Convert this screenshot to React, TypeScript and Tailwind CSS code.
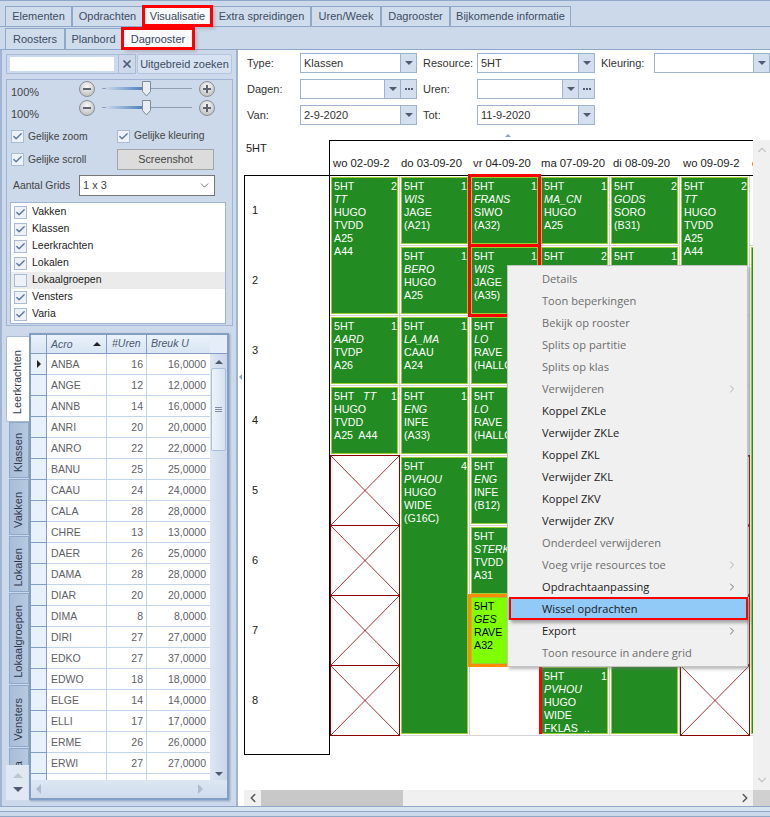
import React from "react";
import { ChevronLeft, ChevronRight, ChevronUp, ChevronDown, X, Check } from "lucide-react";

function Tab({ label, w, active, red }: { label: string; w: number; active?: boolean; red?: boolean }) {
  return (
    <div
      style={{ width: w }}
      className={
        "flex h-full shrink-0 items-center justify-center whitespace-nowrap border border-b-0 border-[#8fa8c8] text-[11px] " +
        (active ? "bg-[#f7f9fc] text-[#39475c] " : "bg-[#cfdcec] text-[#3c4c63] ") +
        (red ? "relative z-10 outline-[3px] -outline-offset-2 outline-[#ff0000] shadow-[3px_3px_3px_#8886]" : "")
      }
    >
      {label}
    </div>
  );
}

function Arrow() {
  return <span className="h-0 w-0 border-x-[4px] border-t-[4px] border-x-transparent border-t-[#4d5c72]" />;
}

function Combo({ w, text, dots }: { w: number; text?: string; dots?: boolean }) {
  return (
    <div style={{ width: w }} className="flex h-[20px] shrink-0 border border-[#9fb3cd] bg-white text-[11px] text-[#333]">
      <div className="flex-1 truncate pl-[3px] leading-[18px]">{text}</div>
      <div className="flex w-[16px] items-center justify-center border-l border-[#9fb3cd] bg-[#d3dfee]">
        <Arrow />
      </div>
      {dots && (
        <div className="flex w-[16px] items-center justify-center gap-px border-l border-[#9fb3cd] bg-[#d3dfee]">
          <span className="h-[2px] w-[2px] bg-[#4d5c72]" />
          <span className="h-[2px] w-[2px] bg-[#4d5c72]" />
          <span className="h-[2px] w-[2px] bg-[#4d5c72]" />
        </div>
      )}
    </div>
  );
}

function Label({ w, children, ml }: { w: number; children: React.ReactNode; ml?: number }) {
  return (
    <div style={{ width: w, marginLeft: ml }} className="shrink-0 text-[11px] leading-[20px] text-[#333]">
      {children}
    </div>
  );
}

function RoundBtn({ plus }: { plus?: boolean }) {
  return (
    <svg width="16" height="16" viewBox="0 0 16 16" className="shrink-0">
      <defs>
        <radialGradient id={plus ? "gp" : "gm"} cx="50%" cy="35%" r="70%">
          <stop offset="0%" stopColor="#fafafa" />
          <stop offset="100%" stopColor="#b9b9b9" />
        </radialGradient>
      </defs>
      <circle cx="8" cy="8" r="7.5" fill={`url(#${plus ? "gp" : "gm"})`} stroke="#8a8f96" />
      <rect x="4" y="7" width="8" height="2" fill="#5d6670" />
      {plus && <rect x="7" y="4" width="2" height="8" fill="#5d6670" />}
    </svg>
  );
}

function Slider() {
  return (
    <div className="flex h-[16px] w-[136px] items-center justify-between">
      <RoundBtn />
      <div className="relative h-[16px] w-[90px]">
        <div className="absolute left-0 right-0 top-[7px] h-px bg-[#8f9fb3]" />
        <div className="absolute left-[4px] top-[6px] h-[3px] w-[42px] bg-gradient-to-r from-[#c9d7ea] to-[#3f74b5]" />
        <svg width="10" height="16" viewBox="0 0 10 16" className="absolute left-[40px] top-0">
          <path d="M.5.5h8v10L4.5 15 .5 10.5z" fill="#e9edf2" stroke="#7f8b99" />
        </svg>
      </div>
      <RoundBtn plus />
    </div>
  );
}

function Check2({ on = true }: { on?: boolean }) {
  return (
    <span className="flex h-[13px] w-[13px] shrink-0 items-center justify-center border border-[#a9bcd5] bg-[#eef2f7]">
      {on && <Check size={11} strokeWidth={3} className="text-[#5878a3]" />}
    </span>
  );
}

function CheckText({ label }: { label: string }) {
  return (
    <div className="flex items-center gap-[4px] whitespace-nowrap text-[10.3px] text-[#444]">
      <Check2 />
      <span>{label}</span>
    </div>
  );
}

function VTab({ label, h, active }: { label: string; h: number; active?: boolean }) {
  return (
    <div
      style={{ height: h }}
      className={
        "flex shrink-0 items-center justify-center pr-[2px] pt-[6px] " +
        (active
          ? "w-[23px] rounded-l-[2px] border border-r-0 border-[#a8bcd6] bg-white "
          : "ml-[3px] w-[20px] border border-[#8fa8c8] bg-gradient-to-r from-[#a9bdd8] to-[#b7c9e0] ")
      }
    >
      <span className="rotate-180 whitespace-nowrap text-[11px] text-[#2f3b4d] [writing-mode:vertical-rl]">{label}</span>
    </div>
  );
}

const rows: [string, number, string][] = [
  ["ANBA", 16, "16,0000"], ["ANGE", 12, "12,0000"], ["ANNB", 14, "16,0000"], ["ANRI", 20, "20,0000"],
  ["ANRO", 22, "22,0000"], ["BANU", 25, "25,0000"], ["CAAU", 24, "24,0000"], ["CALA", 28, "28,0000"],
  ["CHRE", 13, "13,0000"], ["DAER", 26, "25,0000"], ["DAMA", 28, "28,0000"], ["DIAR", 20, "20,0000"],
  ["DIMA", 8, "8,0000"], ["DIRI", 27, "27,0000"], ["EDKO", 27, "37,0000"], ["EDWO", 18, "18,0000"],
  ["ELGE", 14, "14,0000"], ["ELLI", 17, "17,0000"], ["ERME", 26, "26,0000"], ["ERWI", 27, "27,0000"],
  ["", 0, ""],
];

function Table() {
  return (
    <div className="flex h-[467px] w-[200px] shrink-0 flex-col border-2 border-[#829fc3] bg-white shadow-[1px_1px_2px_#8aa0bb]">
      <div className="flex min-h-0 flex-1">
        <div className="flex w-[179px] shrink-0 flex-col overflow-hidden">
          <div className="flex h-[19px] shrink-0 border-b border-[#829fc3] bg-gradient-to-b from-[#eaf2fb] to-[#d9e5f4] text-[10.5px] italic leading-[17px] text-[#4a5a70]">
            <div className="w-[16px] border-r border-[#829fc3]" />
            <div className="flex w-[60px] items-center justify-between border-r border-[#829fc3] pl-[4px] pr-[5px]">
              Acro
              <span className="h-0 w-0 border-x-[4px] border-b-[4px] border-x-transparent border-b-[#222]" />
            </div>
            <div className="w-[40px] border-r border-[#829fc3] pl-[5px]">#Uren</div>
            <div className="flex-1 pl-[4px]">Breuk U</div>
          </div>
          {rows.map((r, i) => (
            <div key={i} className="flex h-[21px] shrink-0 text-[10.5px] leading-[20px] text-[#5e6066]">
              <div className="flex w-[16px] items-center justify-center border-b border-r border-[#829fc3] bg-[#e8f1fb]">
                {i === 0 && <span className="h-0 w-0 border-y-[4px] border-l-[4px] border-y-transparent border-l-[#222]" />}
              </div>
              <div className="w-[60px] border-b border-r border-[#c3d5ec] pl-[4px]">{r[0]}</div>
              <div className="w-[40px] border-b border-r border-[#c3d5ec] pr-[3px] text-right">{r[1] || ""}</div>
              <div className="flex-1 border-b border-[#c3d5ec] pr-[4px] text-right">{r[2]}</div>
            </div>
          ))}
        </div>
        <div className="flex flex-1 flex-col items-center bg-gradient-to-r from-[#dde7f4] to-[#c9d7ea]">
          <div className="h-[19px] w-full border-b border-[#829fc3] bg-[#e4edf8]" />
          <span className="mt-[6px] h-0 w-0 border-x-[4px] border-b-[4px] border-x-transparent border-b-[#4d5c72]" />
          <div className="mt-[4px] flex h-[83px] w-[15px] items-center justify-center rounded-[2px] border border-[#a9c0dc] bg-gradient-to-r from-[#eef3fa] to-[#d6e2f1]">
            <div className="flex w-[7px] flex-col gap-px">
              <span className="h-px bg-[#7f8fa5]" />
              <span className="h-px bg-[#7f8fa5]" />
              <span className="h-px bg-[#7f8fa5]" />
            </div>
          </div>
          <span className="mb-[4px] mt-auto h-0 w-0 border-x-[4px] border-t-[4px] border-x-transparent border-t-[#4d5c72]" />
        </div>
      </div>
      <div className="flex h-[18px] shrink-0 items-center justify-between bg-gradient-to-b from-[#dde7f4] to-[#cfdcec] pl-[5px] pr-[24px]">
        <span className="h-0 w-0 border-y-[5px] border-r-[5px] border-y-transparent border-r-[#aebccd]" />
        <span className="h-0 w-0 border-y-[5px] border-l-[5px] border-y-transparent border-l-[#aebccd]" />
      </div>
    </div>
  );
}

type CellProps = { lines?: string[]; n?: string; span?: string; lime?: boolean; tt?: boolean };

function Cell({ lines = [], n, span = "", lime, tt }: CellProps) {
  return (
    <div className={"h-full min-h-0 min-w-0 border-b border-r border-[#d3d3d3] p-px " + span}>
      <div
        className={
          "relative h-full overflow-hidden border border-[#9acd32] px-[2px] pt-[2px] text-[10.7px] leading-[13px] " +
          (lime ? "bg-[#7fff00] text-black " : "bg-[#228b22] text-white ")
        }
      >
        {n && <span className="absolute right-0 top-[2px]">{n}</span>}
        {tt && (
          <div className="whitespace-pre">
            5HT&nbsp;&nbsp;&nbsp;<i>TT</i>
          </div>
        )}
        {lines.map((l, i) => (
          <div key={i} className={"whitespace-pre " + (i === 1 && !tt ? "italic" : "")}>
            {l}
          </div>
        ))}
      </div>
    </div>
  );
}

function HiCell(p: CellProps & { color: string }) {
  const { color, ...rest } = p;
  return (
    <div className="relative z-10 min-h-0 min-w-0">
      <div
        className={
          "pointer-events-none absolute -bottom-px -left-[2px] -right-px -top-[2px] z-10 border-[3px] " +
          (color === "red" ? "border-[#ff0000]" : "border-[#ff8c00]")
        }
      />
      <Cell {...rest} />
    </div>
  );
}

function XCell() {
  return (
    <div className="-mt-px min-h-0 min-w-0 border border-[#8b0000] bg-white">
      <svg width="100%" height="100%" viewBox="0 0 68 68" preserveAspectRatio="none" className="block">
        <path d="M0 0L68 68M68 0L0 68" stroke="#8b0000" strokeWidth="0.8" />
      </svg>
    </div>
  );
}

function Blank() {
  return <div className="min-h-0 min-w-0 border-b border-r border-[#d3d3d3] bg-white" />;
}

const menu: [string, boolean, boolean][] = [
  ["Details", true, false],
  ["Toon beperkingen", true, false],
  ["Bekijk op rooster", true, false],
  ["Splits op partitie", true, false],
  ["Splits op klas", true, false],
  ["Verwijderen", true, true],
  ["Koppel ZKLe", false, false],
  ["Verwijder ZKLe", false, false],
  ["Koppel ZKL", false, false],
  ["Verwijder ZKL", false, false],
  ["Koppel ZKV", false, false],
  ["Verwijder ZKV", false, false],
  ["Onderdeel verwijderen", true, false],
  ["Voeg vrije resources toe", true, true],
  ["Opdrachtaanpassing", false, true],
  ["Wissel opdrachten", false, false],
  ["Export", false, true],
  ["Toon resource in andere grid", true, false],
];

function Menu() {
  return (
    <div className="absolute left-[507px] top-[265px] z-30 w-[241px] border border-[#c4c4c4] bg-[#f0f0f0] py-[2px] font-[Open_Sans,sans-serif] shadow-[2px_2px_3px_#7778]">
      {menu.map(([t, dis, sub]) => {
        const hi = t === "Wissel opdrachten";
        return (
          <div
            key={t}
            className={
              "relative flex h-[22px] items-center justify-between pl-[34px] pr-[9px] text-[11.1px] " +
              (dis ? "text-[#6d6d6d] " : "text-[#1a1a1a] ") +
              (hi ? "z-10 bg-[#91c9f7]" : "")
            }
          >
            <span>{t}</span>
            {sub && <ChevronRight size={12} strokeWidth={1.5} className={dis ? "text-[#999]" : "text-[#444]"} />}
            {hi && <div className="absolute bottom-0 -right-px -top-px left-px border-2 border-[#ff0000] shadow-[2px_3px_3px_#7779]" />}
          </div>
        );
      })}
    </div>
  );
}

export default function App() {
  const vtabs: [string, number][] = [
    ["Klassen", 56], ["Vakken", 56], ["Lokalen", 56], ["Lokaalgroepen", 91], ["Vensters", 62], ["Varia", 44],
  ];
  return (
    <div className="relative flex h-[817px] w-[770px] flex-col overflow-hidden bg-[#ccd9ea] font-[Liberation_Sans,Arial,sans-serif]">
      <div className="flex h-[27px] shrink-0 items-end border-b border-t border-b-[#8fa8c8] border-t-[#8fa8c8] pl-[5px]">
        <div className="flex h-[20px]">
          <Tab label="Elementen" w={67} />
          <Tab label="Opdrachten" w={71} />
          <Tab label="Visualisatie" w={69} active red />
          <Tab label="Extra spreidingen" w={99} />
          <Tab label="Uren/Week" w={70} />
          <Tab label="Dagrooster" w={69} />
          <Tab label="Bijkomende informatie" w={121} />
        </div>
      </div>
      <div className="flex h-[23px] shrink-0 items-end border-b border-[#8fa8c8] pl-[5px]">
        <div className="flex h-[21px]">
          <Tab label="Roosters" w={60} />
          <Tab label="Planbord" w={57} />
          <Tab label="Dagrooster" w={72} active red />
        </div>
      </div>

      <div className="flex min-h-0 flex-1">
        <div className="flex w-[238px] shrink-0 flex-col border-x-2 border-[#9fb5d2] px-[4px] pt-[4px]">
          <div className="flex h-[20px] shrink-0">
            <div className="flex w-[130px] border border-[#a9bcd5]">
              <div className="my-[2px] ml-[3px] w-[104px] bg-white" />
              <div className="ml-auto flex w-[17px] items-center justify-center border-l border-[#a9bcd5]">
                <X size={12} strokeWidth={3.5} className="text-[#4d5c72]" />
              </div>
            </div>
            <div className="ml-[1px] flex w-[95px] items-center justify-center whitespace-nowrap rounded-[2px] border border-[#b3c5dc] bg-[#d6e2f1] text-[11px] text-[#3c4c63]">
              Uitgebreid zoeken
            </div>
          </div>

          <div className="mt-[5px] flex h-[247px] w-[227px] shrink-0 flex-col border border-[#9fb5d2] pt-px">
            <div className="flex h-[35px] pl-[4px]">
              <div className="flex w-[68px] flex-col gap-[9px] pt-[5px] text-[11px] leading-[13px] text-[#444]">
                <span>100%</span>
                <span>100%</span>
              </div>
              <div className="flex flex-col gap-[3px]">
                <Slider />
                <Slider />
              </div>
            </div>
            <div className="mt-[13px] flex h-[14px] pl-[4px]">
              <div className="w-[106px]"><CheckText label="Gelijke zoom" /></div>
              <CheckText label="Gelijke kleuring" />
            </div>
            <div className="mt-[6px] flex h-[21px] items-center pl-[4px]">
              <div className="w-[106px]"><CheckText label="Gelijke scroll" /></div>
              <div className="flex h-[21px] w-[97px] items-center justify-center border border-[#a5a5a5] bg-[#dcdcdc] text-[10.8px] text-[#444]">
                Screenshot
              </div>
            </div>
            <div className="mt-[5px] flex h-[21px] items-center pl-[6px]">
              <span className="w-[66px] whitespace-nowrap text-[10.4px] text-[#444]">Aantal Grids</span>
              <div className="flex h-[21px] w-[136px] items-center justify-between border border-[#777] bg-white px-[3px] text-[11px] text-[#444]">
                1 x 3
                <ChevronDown size={13} strokeWidth={1.5} className="text-[#555]" />
              </div>
            </div>
            <div className="ml-[3px] mt-[6px] flex h-[122px] w-[216px] flex-col justify-center border border-[#9fb5d2] bg-white text-[10.5px] text-[#222]">
              {["Vakken", "Klassen", "Leerkrachten", "Lokalen", "Lokaalgroepen", "Vensters", "Varia"].map((t) => (
                <div key={t} className={"flex h-[17px] items-center gap-[5px] pl-[3px] " + (t === "Lokaalgroepen" ? "bg-[#ebebeb]" : "")}>
                  <Check2 on={t !== "Lokaalgroepen"} />
                  {t}
                </div>
              ))}
            </div>
          </div>

          <div className="mt-[7px] flex shrink-0">
            <div className="flex h-[467px] w-[23px] shrink-0 flex-col overflow-hidden pt-[3px]">
              <div className="relative flex min-h-0 flex-1 flex-col overflow-hidden">
                <VTab label="Leerkrachten" h={86} active />
                {vtabs.map(([t, h]) => (
                  <div key={t} className="shrink-0 pb-[1px]">
                    <VTab label={t} h={h} />
                  </div>
                ))}
              </div>
              <div className="flex h-[35px] shrink-0 flex-col items-center justify-around bg-[#dfe8f3] py-[4px]">
                <span className="h-0 w-0 border-x-[5px] border-b-[5px] border-x-transparent border-b-[#b9c6d6]" />
                <span className="h-0 w-0 border-x-[5px] border-t-[5px] border-x-transparent border-t-[#4d5c72]" />
              </div>
            </div>
            <Table />
          </div>
        </div>

        <div className="flex min-w-0 flex-1 flex-col bg-white">
          <div className="relative flex h-[90px] shrink-0 flex-col gap-[6px] pl-[9px] pt-[3px]">
            <div className="flex">
              <Label w={53}>Type:</Label>
              <Combo w={117} text="Klassen" />
              <Label w={54} ml={6}>Resource:</Label>
              <Combo w={118} text="5HT" />
              <Label w={53} ml={6}>Kleuring:</Label>
              <Combo w={116} />
            </div>
            <div className="flex">
              <Label w={53}>Dagen:</Label>
              <Combo w={117} dots />
              <Label w={54} ml={6}>Uren:</Label>
              <Combo w={118} dots />
            </div>
            <div className="flex">
              <Label w={53}>Van:</Label>
              <Combo w={117} text="2-9-2020" />
              <Label w={54} ml={6}>Tot:</Label>
              <Combo w={118} text="11-9-2020" />
            </div>
            <span className="absolute left-[267px] top-[84px] h-0 w-0 border-x-[3px] border-b-[3px] border-x-transparent border-b-[#8fa3bd]" />
          </div>

          <div className="flex min-h-0 flex-1">
            <div className="relative w-[6px] shrink-0">
              <span className="absolute left-[1px] top-[234px] h-0 w-0 border-y-[3px] border-r-[3px] border-y-transparent border-r-[#8fa3bd]" />
            </div>
            <div className="flex min-w-0 flex-1 flex-col">
              <div className="flex min-h-0 flex-1">
                <div className="flex w-[509px] shrink-0 overflow-hidden">
                  <div className="flex w-[86px] shrink-0 flex-col">
                    <div className="h-[35px] border-r border-black pl-[2px] pt-[2px] text-[11px] leading-[13px] text-[#222]">5HT</div>
                    <div className="flex h-[580px] flex-col border border-black pl-[7px] text-[11px] text-[#222]">
                      {[1, 2, 3, 4, 5, 6, 7, 8].map((n) => (
                        <div key={n} className="flex h-[70px] shrink-0 items-center pb-[2px]">{n}</div>
                      ))}
                    </div>
                  </div>
                  <div className="flex w-[490px] shrink-0 flex-col">
                    <div className="flex h-[36px] w-[423px] items-end border-b border-t border-black pb-[5px] text-[11.3px] leading-[13px] text-[#222]">
                      <div className="w-[71px] shrink-0 overflow-hidden whitespace-nowrap pl-[3px]">wo 02-09-2</div>
                      <div className="w-[72px] shrink-0 overflow-hidden whitespace-nowrap">do 03-09-20</div>
                      <div className="w-[68px] shrink-0 overflow-hidden whitespace-nowrap">vr 04-09-20</div>
                      <div className="w-[72px] shrink-0 overflow-hidden whitespace-nowrap">ma 07-09-20</div>
                      <div className="w-[70px] shrink-0 overflow-hidden whitespace-nowrap">di 08-09-20</div>
                      <div className="w-[69px] shrink-0 overflow-hidden whitespace-nowrap">wo 09-09-2</div>
                      <div className="shrink-0 overflow-hidden whitespace-nowrap">d</div>
                    </div>
                    <div className="grid grid-flow-col grid-cols-[repeat(7,70px)] grid-rows-[repeat(8,70px)]">
                      {/* wo */}
                      <Cell span="row-span-2" n="2" lines={["5HT", "TT", "HUGO", "TVDD", "A25", "A44"]} />
                      <Cell n="1" lines={["5HT", "AARD", "TVDP", "A26"]} />
                      <Cell n="1" tt lines={["HUGO", "TVDD", "A25  A44"]} />
                      <XCell /><XCell /><XCell /><XCell />
                      {/* do */}
                      <Cell n="1" lines={["5HT", "WIS", "JAGE", "(A21)"]} />
                      <Cell n="1" lines={["5HT", "BERO", "HUGO", "A25"]} />
                      <Cell n="1" lines={["5HT", "LA_MA", "CAAU", "A24"]} />
                      <Cell n="1" lines={["5HT", "ENG", "INFE", "(A33)"]} />
                      <Cell span="row-span-4" n="4" lines={["5HT", "PVHOU", "HUGO", "WIDE", "(G16C)"]} />
                      {/* vr */}
                      <HiCell color="red" n="1" lines={["5HT", "FRANS", "SIWO", "(A32)"]} />
                      <HiCell color="red" n="1" lines={["5HT", "WIS", "JAGE", "(A35)"]} />
                      <Cell n="1" lines={["5HT", "LO", "RAVE", "(HALLO"]} />
                      <Cell n="1" lines={["5HT", "LO", "RAVE", "(HALLO"]} />
                      <Cell lines={["5HT", "ENG", "INFE", "(B12)"]} />
                      <Cell lines={["5HT", "STERK", "TVDD", "A31"]} />
                      <HiCell color="orange" lime lines={["5HT", "GES", "RAVE", "A32"]} />
                      <Blank />
                      {/* ma */}
                      <Cell n="1" lines={["5HT", "MA_CN", "HUGO", "A25"]} />
                      <Cell span="row-span-6" n="2" lines={["5HT", "GODS"]} />
                      <div className="relative min-h-0 min-w-0">
                        <div className="absolute bottom-[2px] left-[-1px] top-0 z-10 w-[3px] bg-[#ff0000]" />
                        <Cell n="1" lines={["5HT", "PVHOU", "HUGO", "WIDE", "FKLAS  .."]} />
                      </div>
                      {/* di */}
                      <Cell n="2" lines={["5HT", "GODS", "SORO", "(B31)"]} />
                      <Cell n="1" lines={["5HT", "WIS"]} />
                      <Cell lines={[]} />
                      <Cell lines={[]} />
                      <Cell span="row-span-4" lines={[]} />
                      {/* wo */}
                      <Cell span="row-span-2" n="2" lines={["5HT", "TT", "HUGO", "TVDD", "A25", "A44"]} />
                      <Cell lines={[]} />
                      <Cell lines={[]} />
                      <XCell /><XCell /><XCell /><XCell />
                      {/* d */}
                      <Blank />
                      <Cell span="row-span-7" lines={[]} />
                    </div>
                  </div>
                </div>
                <div className="flex w-[17px] shrink-0 flex-col items-center justify-between bg-[#f0f0f0] py-[3px]">
                  <ChevronUp size={14} strokeWidth={2} className="text-[#c4c4c4]" />
                  <ChevronDown size={14} strokeWidth={2} className="text-[#c4c4c4]" />
                </div>
              </div>
              <div className="flex h-[16px] shrink-0">
                <div className="flex w-[509px] items-center bg-[#f0f0f0]">
                  <div className="flex w-[17px] items-center justify-center">
                    <ChevronLeft size={14} strokeWidth={2.5} className="text-[#555]" />
                  </div>
                  <div className="h-full w-[142px] bg-[#c8c8c8]" />
                  <div className="ml-auto flex w-[17px] items-center justify-center">
                    <ChevronRight size={14} strokeWidth={2.5} className="text-[#555]" />
                  </div>
                </div>
                <div className="flex-1 bg-[#d0d0d0]" />
              </div>
            </div>
          </div>
        </div>
      </div>

      <div className="flex h-[11px] shrink-0 flex-col border-y border-[#8fa8c8]">
        <div className="h-[5px] border-b border-[#8fa8c8] bg-[#d8e3f0]" />
      </div>

      <Menu />
    </div>
  );
}
